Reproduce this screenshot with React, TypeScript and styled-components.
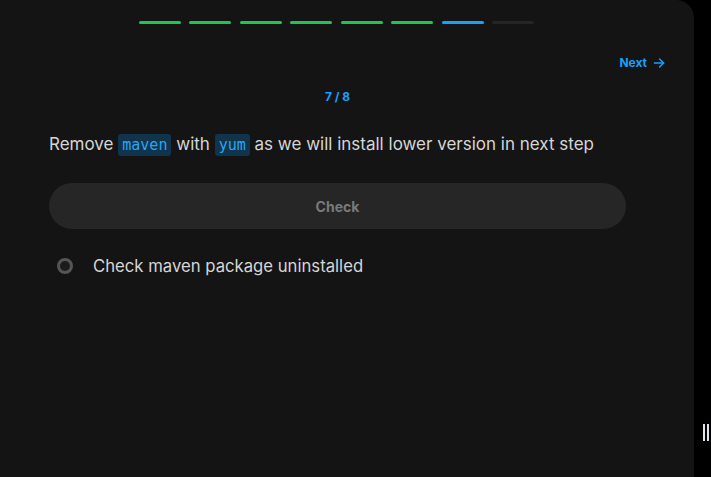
import React from "react";
import styled, { createGlobalStyle } from "styled-components";

const Global = createGlobalStyle`
  html, body { margin: 0; padding: 0; background: #000; }
  body { font-family: Inter, "Noto Sans", sans-serif; }
  #root { height: 477px; }
`;

const Page = styled.div`
  position: relative;
  width: 711px;
  height: 477px;
  background: #000;
  overflow: hidden;
`;

const Panel = styled.div`
  width: 694px;
  height: 477px;
  background: #141414;
  border-top-right-radius: 18px;
  display: flex;
  flex-direction: column;
`;

const Column = styled.div`
  width: 577px;
  margin-left: 49px;
  display: flex;
  flex-direction: column;
`;

const Progress = styled.div`
  display: flex;
  justify-content: center;
  gap: 8.5px;
  margin-top: 21px;
  padding-right: 2px;
`;

const Segment = styled.div<{ $state: "done" | "current" | "todo" }>`
  width: 42px;
  height: 3px;
  border-radius: 2px;
  background: ${(p) =>
    p.$state === "done" ? "#1fc454" : p.$state === "current" ? "#1a9fff" : "#252525"};
`;

const NextRow = styled.div`
  display: flex;
  justify-content: flex-end;
  padding-right: 28px;
  margin-top: 31px;
`;

const NextLink = styled.a`
  display: flex;
  align-items: center;
  gap: 5px;
  color: #1a9fff;
  font-size: 12px;
  font-weight: 700;
  line-height: 16px;
  cursor: pointer;
`;

const StepCount = styled.div`
  text-align: center;
  color: #1a9fff;
  font-size: 12px;
  font-weight: 700;
  line-height: 16px;
  margin-top: 18px;
`;

const Instruction = styled.p`
  margin: 26px 0 0;
  color: #d6d6d6;
  font-size: 17px;
  line-height: 26px;
`;

const Code = styled.code`
  font-family: "DejaVu Sans Mono", "Liberation Mono", monospace;
  font-size: 15px;
  color: #2fa4ef;
  background: #11344d;
  border-radius: 3px;
  padding: 2px 4px;
`;

const CheckButton = styled.button`
  margin-top: 25px;
  height: 46px;
  border: none;
  border-radius: 23px;
  background: #262626;
  color: #7a7a7a;
  font-family: Inter, "Noto Sans", sans-serif;
  font-size: 14px;
  font-weight: 700;
  cursor: pointer;
`;

const Task = styled.div`
  display: flex;
  align-items: center;
  gap: 20px;
  margin-top: 26px;
  padding-left: 8px;
`;

const Ring = styled.div`
  width: 10px;
  height: 10px;
  border-radius: 50%;
  border: 3px solid #555;
  background: #1c1c1c;
  flex: none;
`;

const TaskText = styled.span`
  color: #d6d6d6;
  font-size: 16.7px;
  line-height: 22px;
`;

const Handle = styled.div`
  position: absolute;
  left: 703px;
  top: 424px;
  display: flex;
  gap: 2px;
`;

const HandleBar = styled.div`
  width: 2px;
  height: 17px;
  background: #dfe3ea;
`;

const steps: Array<"done" | "current" | "todo"> = [
  "done", "done", "done", "done", "done", "done", "current", "todo",
];

export default function App() {
  return (
    <Page>
      <Global />
      <Panel>
        <Column>
          <Progress>
            {steps.map((s, i) => (
              <Segment key={i} $state={s} />
            ))}
          </Progress>
        </Column>
        <NextRow>
          <NextLink>
            Next
            <svg width="14" height="14" viewBox="0 0 24 24" fill="none" stroke="currentColor" strokeWidth="2.4" strokeLinecap="round" strokeLinejoin="round">
              <path d="M4 12h16" />
              <path d="M13 5l7 7-7 7" />
            </svg>
          </NextLink>
        </NextRow>
        <Column>
          <StepCount>7 / 8</StepCount>
          <Instruction>
            Remove <Code>maven</Code> with <Code>yum</Code> as we will install lower version in next step
          </Instruction>
          <CheckButton>Check</CheckButton>
          <Task>
            <Ring />
            <TaskText>Check maven package uninstalled</TaskText>
          </Task>
        </Column>
      </Panel>
      <Handle>
        <HandleBar />
        <HandleBar />
      </Handle>
    </Page>
  );
}
